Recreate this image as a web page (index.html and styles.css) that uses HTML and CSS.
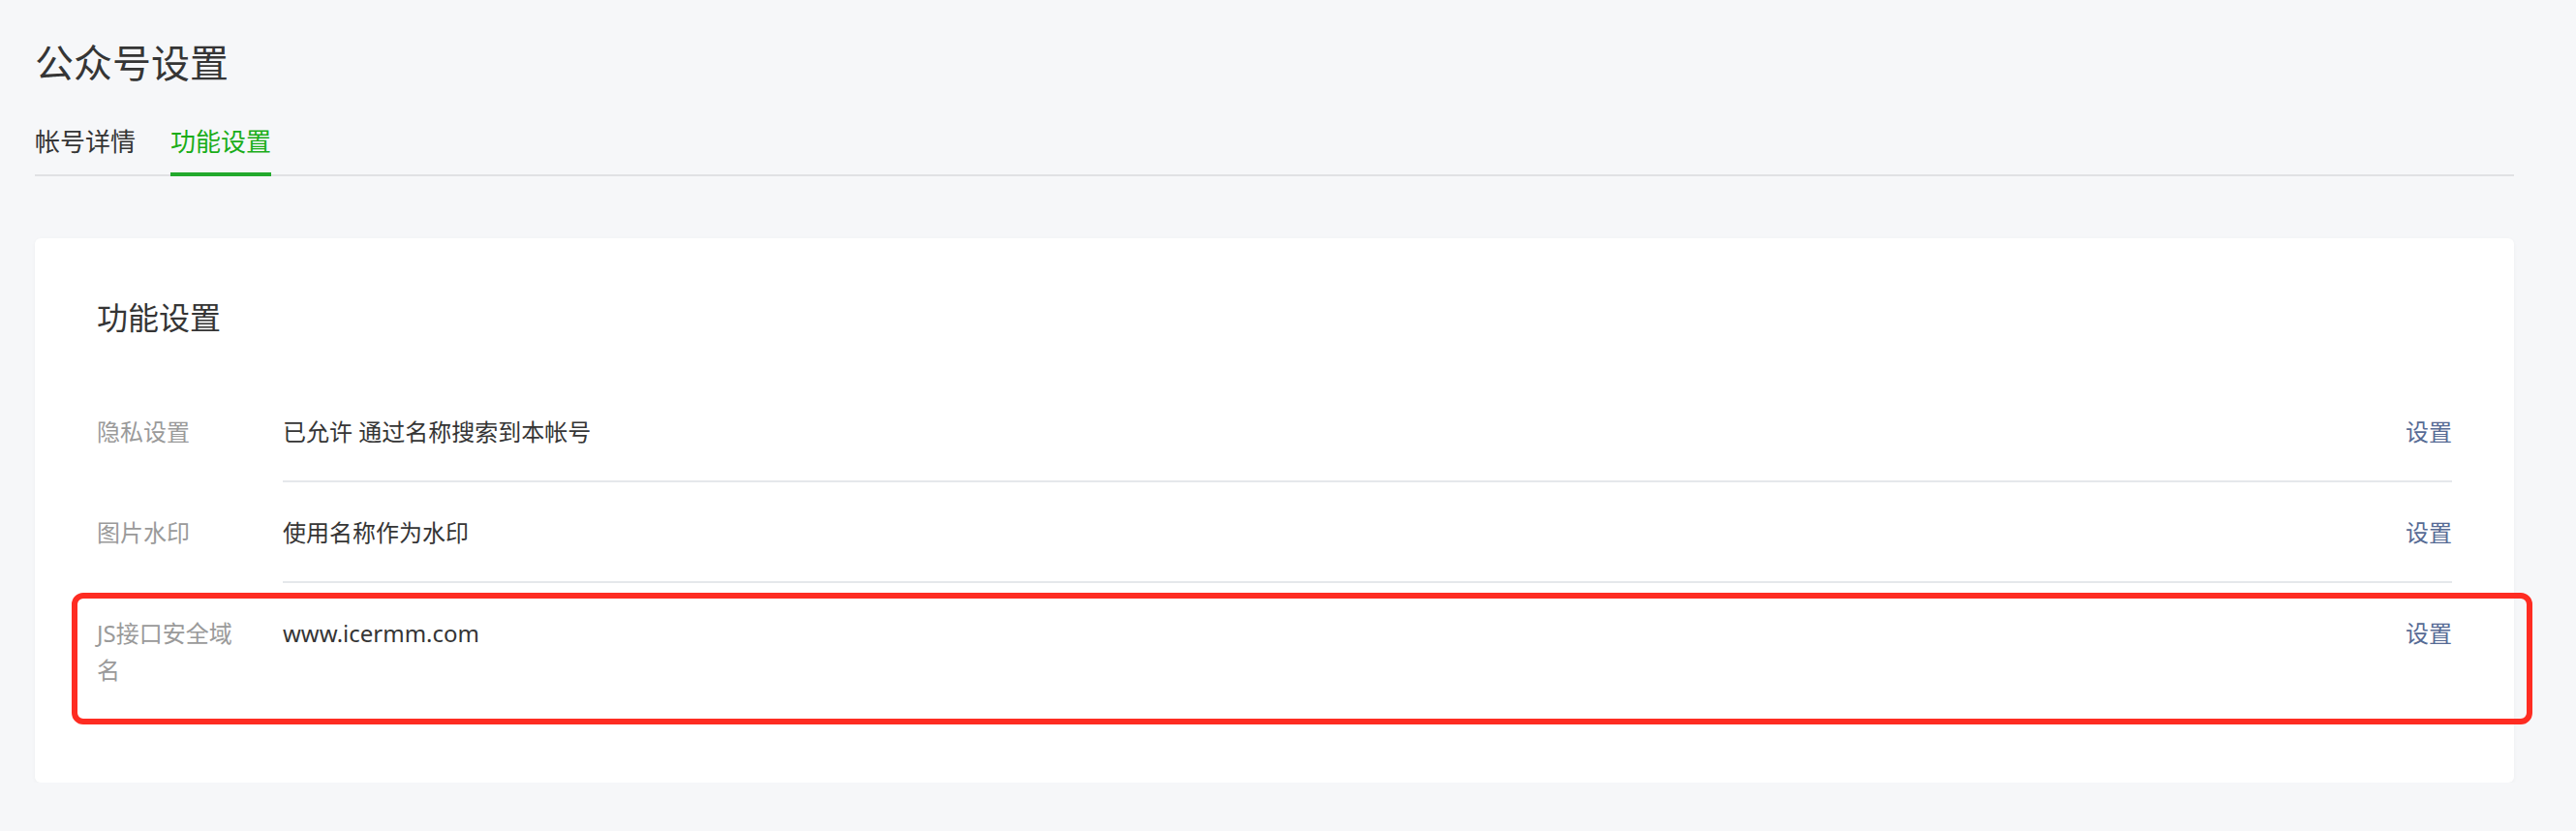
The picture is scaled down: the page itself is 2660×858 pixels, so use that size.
FILE: index.html
```html
<!DOCTYPE html>
<html lang="zh-CN">
<head>
<meta charset="utf-8">
<title>公众号设置</title>
<link rel="stylesheet" href="styles.css">
</head>
<body>
<div class="page">
  <h1 class="page-title">公众号设置</h1>
  <nav class="tabs">
    <a class="tab">帐号详情</a>
    <a class="tab tab-active">功能设置</a>
  </nav>
  <section class="card">
    <h2 class="card-title">功能设置</h2>
    <div class="row">
      <div class="row-label">隐私设置</div>
      <div class="row-body">
        <div class="row-value">已允许 通过名称搜索到本帐号</div>
        <a class="row-link">设置</a>
      </div>
    </div>
    <div class="row">
      <div class="row-label">图片水印</div>
      <div class="row-body">
        <div class="row-value">使用名称作为水印</div>
        <a class="row-link">设置</a>
      </div>
    </div>
    <div class="row row-last row-marked">
      <div class="row-label">JS接口安全域名</div>
      <div class="row-body">
        <div class="row-value">www.icermm.com</div>
        <a class="row-link">设置</a>
      </div>
      <div class="mark"></div>
    </div>
  </section>
</div>
</body>
</html>
```

FILE: styles.css
```css
html, body {
  margin: 0;
  padding: 0;
}
body {
  background: #f6f7f9;
  font-family: "Noto Sans", "Noto Sans CJK SC", sans-serif;
  color: #353535;
}
.page {
  padding: 37px 64px 0 36px;
}
.page-title {
  margin: 0;
  font-size: 40px;
  line-height: 56px;
  font-weight: 400;
  color: #353535;
}
.tabs {
  display: flex;
  gap: 36px;
  margin-top: 35px;
  border-bottom: 2px solid #e0e1e4;
}
.tab {
  font-size: 26px;
  line-height: 36px;
  padding-bottom: 14px;
  border-bottom: 4px solid transparent;
  margin-bottom: -2px;
  color: #353535;
}
.tab-active {
  color: #1aad19;
  border-bottom-color: #22a92c;
}
.card {
  margin-top: 64px;
  background: #fff;
  border-radius: 6px;
  box-shadow: 0 1px 4px rgba(0, 0, 0, 0.04);
  padding: 56px 64px 64px 64px;
}
.card-title {
  margin: 0 0 40px 0;
  font-size: 32px;
  line-height: 52px;
  font-weight: 400;
  color: #353535;
}
.row {
  display: grid;
  grid-template-columns: 192px 1fr;
  font-size: 24px;
  line-height: 38px;
}
.row-marked {
  position: relative;
}
.row-label {
  color: #9a9a9a;
  padding: 33px 32px 0 0;
  word-break: break-all;
}
.row-body {
  display: flex;
  justify-content: space-between;
  align-items: flex-start;
  padding: 33px 0 31px 0;
  border-bottom: 2px solid #e5e8eb;
}
.row-last .row-body {
  border-bottom-color: transparent;
  padding-bottom: 69px;
}
.row-value {
  color: #353535;
}
.row-link {
  color: #576b95;
}
.mark {
  position: absolute;
  top: 10px;
  left: -26px;
  right: -83px;
  bottom: -4px;
  border: 6px solid #fe2c22;
  border-radius: 12px;
  pointer-events: none;
}
```
